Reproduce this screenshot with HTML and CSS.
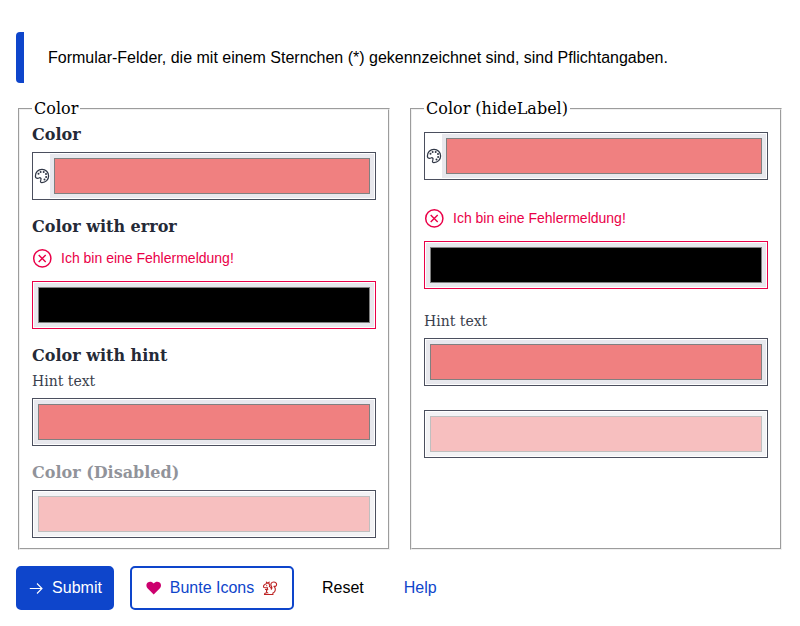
FILE: index.html
```
<!DOCTYPE html>
<html lang="de">
<head>
<meta charset="utf-8">
<title>Color</title>
<link rel="stylesheet" href="styles.css">
</head>
<body>
<svg class="defs" aria-hidden="true">
  <symbol id="palette" viewBox="0 0 16 16">
    <path d="M1.400 8.200C1.300 4.200 4.300 1.400 8 1.400c3.700 0 6.600 2.900 6.600 6.500 0 3.700-2.900 6.700-6.600 6.700-1.500 0-1.800-.9-1.300-2 .5-1.200.6-2.200-.2-2.700-.9-.6-1.600.4-2.800.4-1.300 0-2.200-.7-2.300-2.100z" fill="none" stroke="currentColor" stroke-width="1.250"/>
    <g fill="currentColor"><circle cx="4.500" cy="5.800" r="1"/><circle cx="6.600" cy="4" r="1"/><circle cx="9.700" cy="4" r="1"/><circle cx="12" cy="6" r="1"/><circle cx="12.100" cy="8.900" r="1"/><circle cx="10.500" cy="11.500" r="1"/></g>
  </symbol>
  <symbol id="error" viewBox="0 0 20 20">
    <g fill="none" stroke="currentColor" stroke-width="1.500"><circle cx="10.300" cy="10.400" r="8.600"/><path d="M6.700 6.900l7 7M13.700 6.900l-7 7" stroke-width="1.400"/></g>
  </symbol>
</svg>
<p class="notice">Formular-Felder, die mit einem Sternchen (*) gekennzeichnet sind, sind Pflichtangaben.</p>
<form>
  <div class="columns">
    <fieldset>
      <legend>Color</legend>
      <div class="field">
        <div class="label">Color</div>
        <div class="box"><svg class="palette"><use href="#palette"/></svg><div class="well"><div class="swatch"></div></div></div>
      </div>
      <div class="field invalid">
        <div class="label">Color with error</div>
        <div class="message"><svg><use href="#error"/></svg>Ich bin eine Fehlermeldung!</div>
        <div class="box"><div class="well"><div class="swatch"></div></div></div>
      </div>
      <div class="field">
        <div class="label">Color with hint</div>
        <div class="hint">Hint text</div>
        <div class="box"><div class="well"><div class="swatch"></div></div></div>
      </div>
      <div class="field disabled">
        <div class="label">Color (Disabled)</div>
        <div class="box"><div class="well"><div class="swatch"></div></div></div>
      </div>
    </fieldset>
    <fieldset class="unlabelled">
      <legend>Color (hideLabel)</legend>
      <div class="field">
        <div class="box"><svg class="palette"><use href="#palette"/></svg><div class="well"><div class="swatch"></div></div></div>
      </div>
      <div class="field invalid">
        <div class="message"><svg><use href="#error"/></svg>Ich bin eine Fehlermeldung!</div>
        <div class="box"><div class="well"><div class="swatch"></div></div></div>
      </div>
      <div class="field">
        <div class="hint">Hint text</div>
        <div class="box"><div class="well"><div class="swatch"></div></div></div>
      </div>
      <div class="field disabled">
        <div class="box"><div class="well"><div class="swatch"></div></div></div>
      </div>
    </fieldset>
  </div>
  <div class="actions">
    <button type="button" class="primary"><svg viewBox="0 0 16 16"><path d="M1.800 8.500h12M9 3.500l5 5-5 5" fill="none" stroke="currentColor" stroke-width="1.100"/></svg>Submit</button>
    <button type="button" class="outlined"><svg class="heart" viewBox="0 0 16 16"><path d="M7.700 14.600L1.500 8.300C-.1 6.600.1 3.900 1.800 2.600 3.600 1.300 6 1.700 7.700 3.400c1.700-1.700 4.100-2.100 5.900-.8 1.700 1.300 1.900 4 .3 5.700z" fill="currentColor"/></svg>Bunte Icons<svg class="squirrel" viewBox="0 0 16 16"><path d="M4.500 3.700V2.300l1.200.9 1.300-.9v1.600c.8.700 1 1.500.5 2.600 1.100.5 1.800 1.400 1.900 2.600.9-.8.7-1.700.1-2.700C8 4.300 9.200 2 11.700 2c1.900 0 3.100 1.300 2.900 2.700-.2 1.500-1.400 2-3 1.500 1.900 1.600 2 3.700 1.200 5.200-.4.900-1 1.400-1.900 1.700v1.400H2.500c0-1.100.7-1.700 2.800-1.700-1.100-.9-1.200-2.100 0-3.300H3M5.300 9.500l.2-1.700H3c-1.100 0-1.600-.5-1.500-1.300.1-1.200 1.400-2.500 3-2.800" fill="none" stroke="currentColor" stroke-width="1.100"/><circle cx="4.700" cy="5.700" r=".6" fill="currentColor"/></svg></button>
    <button type="button" class="plain">Reset</button>
    <a class="link">Help</a>
  </div>
</form>
</body>
</html>
```
FILE: styles.css
```
* { box-sizing: border-box; }
body {
  margin: 0;
  padding: 32px 16px 16px;
  background: #fff;
  color: #000;
  font: 16px/19px "DejaVu Serif", serif;
}
.defs { display: none; }
.notice {
  height: 51px;
  margin: 0 0 16px;
  padding-left: 24px;
  border-left: 8px solid #0e45cb;
  border-radius: 4px 0 0 4px;
  font: 16px/51px "Liberation Sans", sans-serif;
}
.columns { display: grid; grid-template-columns: 1fr 1fr; gap: 16px; }
fieldset {
  height: 451px;
  min-width: 0;
  margin: 0 2px;
  padding: 6px 12px 10px;
  border: 2px groove rgb(240, 240, 240);
}
legend { padding: 0 2px; }
.field { margin-bottom: 16px; }
.field:last-child { margin-bottom: 0; }
.label {
  height: 20px;
  margin-bottom: 8px;
  color: #252a37;
  font-weight: 700;
  line-height: 22px;
}
.hint {
  height: 16px;
  margin-bottom: 9px;
  color: #3a3e4c;
  font-size: 14px;
  line-height: 16px;
}
.message {
  display: flex;
  align-items: center;
  gap: 9px;
  height: 20px;
  margin-bottom: 13px;
  color: #ea0048;
  font: 14px/20px "Liberation Sans", sans-serif;
}
.label + .message { margin-top: 12px; }
.message svg { width: 20px; height: 20px; }
.box {
  display: flex;
  align-items: center;
  height: 48px;
  padding: 1px;
  border: 1px solid #4b4f5e;
}
.palette { width: 16px; height: 16px; color: #303746; }
.well { flex: 1; height: 44px; padding: 4px; background: #e8e8ed; }
.swatch { height: 36px; border: 1px solid #808080; background: #f08080; }
.invalid .box { border-color: #ea0048; }
.invalid .swatch { background: #000; }
.disabled .label, .disabled .well { opacity: .5; }
.unlabelled { padding-top: 14px; }
.unlabelled .field { margin-bottom: 24px; }
.unlabelled .field:first-of-type { margin-bottom: 28px; }
.actions { display: flex; margin-top: 16px; }
.actions > * {
  display: flex;
  align-items: center;
  justify-content: center;
  gap: 8px;
  height: 44px;
  padding: 0;
  border: 2px solid transparent;
  border-radius: 5px;
  background: none;
  color: #000;
  font: 16px/20px "Liberation Sans", sans-serif;
}
.actions svg { width: 16px; height: 16px; }
.actions .primary { width: 98px; background: #0e45cb; color: #fff; border-color: #0e45cb; }
.actions .outlined { width: 164px; margin-left: 16px; border-color: #0e45cb; color: #0e45cb; }
.actions .heart { color: #cc006e; }
.actions .squirrel { color: #bd2323; }
.actions .plain { margin-left: 26px; }
.actions .link { margin-left: 36px; color: #0e45cb; }
```
